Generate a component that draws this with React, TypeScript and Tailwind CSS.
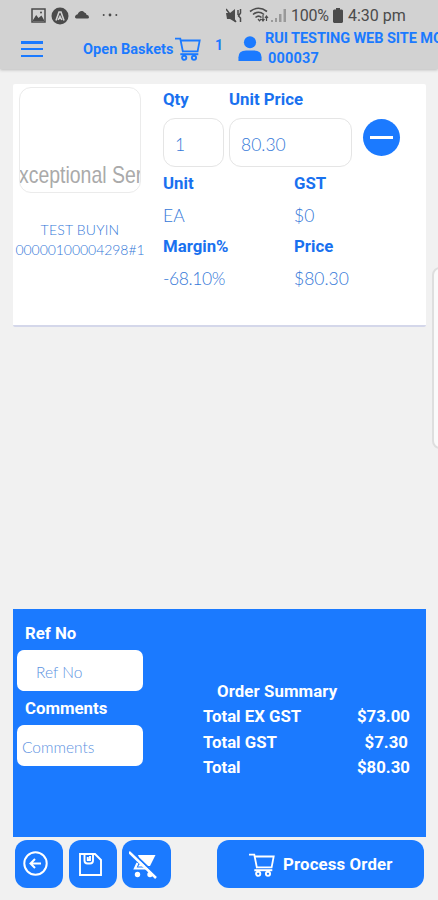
import type { ReactNode } from "react";

const summary = [
  { label: "Total EX GST", value: "$73.00", pad: "pr-0" },
  { label: "Total GST", value: "$7.30", pad: "pr-0.5" },
  { label: "Total", value: "$80.30", pad: "pr-0" },
];

function CartIcon({ className }: { className: string }) {
  return (
    <svg viewBox="0 0 26 24" className={className} fill="none" stroke="currentColor">
      <path d="M0 1.7h5.3L8 15.2M5.8 3.5h18.9l-2.1 10.8H7.8" strokeWidth="1.8" />
      <path d="M5.3 17.2h18" strokeWidth="2" />
      <circle cx="9.2" cy="20.8" r="2.1" strokeWidth="1.9" />
      <circle cx="19" cy="20.8" r="2.1" strokeWidth="1.9" />
    </svg>
  );
}

function StatusBar() {
  return (
    <div className="flex h-[31px] pt-[7px] pl-[31px] text-[#4b4b4b]">
      <svg viewBox="0 0 15 15" className="mt-px h-[15px] w-[15px] shrink-0">
        <path fill="none" stroke="currentColor" strokeWidth="1.5" d="M1 1h13v13H1z" />
        <path fill="currentColor" d="M2 12l3.2-5 2.3 3 3-2.5L13 12v1H2z" />
        <circle cx="10" cy="4.5" r="1" fill="currentColor" />
      </svg>
      <svg viewBox="0 0 18 18" className="ml-[5px] h-[18px] w-[18px] shrink-0">
        <circle cx="9" cy="9" r="8.5" fill="currentColor" />
        <path d="M5 13.5L8 5h2l3 8.5M7.2 13L9 9.5l1.8 3.5" fill="none" stroke="#d2d2d2" strokeWidth="1.6" />
      </svg>
      <svg viewBox="0 0 16 10" className="ml-[5px] mt-[3px] h-[9px] w-4 shrink-0">
        <path fill="currentColor" d="M1.8 9.5Q0 9.2.2 7.4.7 5 3.2 4.8C4.1 1 8.8-.6 11 3.1q1.7.1 2 2.2 2.7.4 2.8 2.8-.1 1.4-1.6 1.4z" />
      </svg>
      <svg viewBox="0 0 16 4" className="ml-3 mt-1.5 h-1 w-4 shrink-0" fill="currentColor">
        <circle cx="1.7" cy="2" r="1" />
        <circle cx="8" cy="2" r="1.4" />
        <circle cx="14.3" cy="2" r="1" />
      </svg>
      <svg viewBox="0 0 16 16" className="ml-[108px] mt-px h-4 w-4 shrink-0">
        <path fill="currentColor" d="M0 5h4l5-4v13l-5-3H1z" />
        <path d="M0 1l10 13M12 2v5M14.5 1v4l-2 3 2 2v4" fill="none" stroke="currentColor" strokeWidth="1.5" />
      </svg>
      <svg viewBox="0 0 20 16" className="ml-[7px] h-4 w-5 shrink-0" fill="none" stroke="currentColor">
        <path d="M1 4.5Q9.5-2 18 4.5M4 7.5q5.5-4.5 11 0M6.5 10.5q3-2.6 6 0" strokeWidth="1.6" />
        <path d="M9 12l1.5 1.8L12 12M14 8v6M12.5 12l1.5 2 1.5-2M17.5 14V9M16 11l1.5-2 1.5 2" strokeWidth="1.2" />
      </svg>
      <svg viewBox="0 0 16 16" className="ml-0.5 h-4 w-4 shrink-0 text-[#999]" fill="currentColor">
        <path d="M0 13h2v2H0zM4 11h2v4H4zM8 7h2.5v8H8zM12.5 2H15v13h-2.5z" />
      </svg>
      <span className="ml-1 w-[42px] whitespace-nowrap text-[16px] leading-[18px] tracking-[-0.25px]">100%</span>
      <svg viewBox="0 0 10 15" className="mt-px h-[15px] w-2.5 shrink-0" fill="currentColor">
        <path d="M3 0h4v1.5h2l1 1V14l-1 1H1l-1-1V2.5l1-1h2z" />
      </svg>
      <span className="ml-[5px] whitespace-nowrap text-[16px] leading-[18px]">4:30 pm</span>
    </div>
  );
}

function Header() {
  return (
    <header className="h-[69px] shrink-0 overflow-hidden bg-[#d2d2d2] shadow-[0_1px_3px_#bbb]">
      <StatusBar />
      <div className="flex h-[38px] font-bold text-[#1b7aff]">
        <button className="ml-[21px] mt-[10px] flex h-4 w-[22px] shrink-0 flex-col justify-between">
          <span className="h-[2.5px] w-full bg-current" />
          <span className="h-[2.5px] w-full bg-current" />
          <span className="h-[2.5px] w-full bg-current" />
        </button>
        <span className="ml-10 mt-[10px] w-[91px] shrink-0 whitespace-nowrap text-[14.5px] leading-[18px] tracking-[0.05px]">
          Open Baskets
        </span>
        <CartIcon className="ml-[1px] mt-1.5 h-6 w-[26px] shrink-0" />
        <span className="ml-[14px] mt-[5px] w-2 shrink-0 text-[14px] leading-[18px]">1</span>
        <svg viewBox="0 0 24 27" className="ml-[15px] mt-[5px] h-[26px] w-6 shrink-0" fill="currentColor">
          <circle cx="12" cy="6.5" r="6.3" />
          <path d="M0 26v-4q0-7 8-7h8q8 0 8 7v4z" />
        </svg>
        <div className="ml-[3px] -mt-0.5 whitespace-nowrap text-[14.5px] leading-5">
          <div className="tracking-[-0.07px]">RUI TESTING WEB SITE MOBILE</div>
          <div className="pl-[3px] tracking-[0.18px]">000037</div>
        </div>
      </div>
    </header>
  );
}

function Label({ children, className }: { children: ReactNode; className: string }) {
  return <div className={`text-[16.8px] font-bold leading-[18px] ${className}`}>{children}</div>;
}

function Value({ children, className }: { children: ReactNode; className: string }) {
  return (
    <div className={`font-[Lato] text-[17.5px] font-light leading-[18px] text-[#3478d8] ${className}`}>
      {children}
    </div>
  );
}

function ItemCard() {
  return (
    <section className="ml-[13px] mt-[15px] flex h-[243px] w-[413px] shrink-0 rounded-xs border-b-2 border-[#d4d7ea] bg-white text-[#1971ef]">
      <div className="w-[134px] shrink-0">
        <div className="ml-1.5 mt-[3px] h-[106px] w-[122px] overflow-hidden rounded-xl border border-[#ebebeb] pt-[75px]">
          <span className="-ml-px block origin-left scale-x-[0.81] whitespace-nowrap font-['Liberation_Sans'] text-[24px] leading-6 text-[#aaa]">
            xceptional Service
          </span>
        </div>
        <div className="mt-[27px] whitespace-nowrap text-center font-[Lato] text-[14px] font-light leading-5 text-[#3478d8]">
          <div className="tracking-[0.2px]">TEST BUYIN</div>
          <div className="tracking-[-0.05px]">00000100004298#1</div>
        </div>
      </div>
      <div className="ml-4 mt-1.5">
        <div className="flex">
          <Label className="w-[66px]">Qty</Label>
          <Label className="">Unit Price</Label>
        </div>
        <div className="mt-[10px] flex">
          <div className="h-[49px] w-[61px] rounded-xl border border-[#e5e5e5] pl-[11px] pt-[17px]">
            <Value className="">1</Value>
          </div>
          <div className="ml-[5px] h-[49px] w-[123px] rounded-xl border border-[#e5e5e5] pl-[11px] pt-[17px]">
            <Value className="">80.30</Value>
          </div>
          <button className="ml-[11px] mt-px flex h-[37px] w-[37px] items-center justify-center rounded-full bg-[#1b7aff]">
            <span className="h-[3px] w-[23px] bg-white" />
          </button>
        </div>
        <div className="mt-[7px] grid grid-cols-[131px_1fr]">
          <Label className="">Unit</Label>
          <Label className="">GST</Label>
          <Value className="mt-[15px]">EA</Value>
          <Value className="mt-[15px]">$0</Value>
          <Label className="mt-3">Margin%</Label>
          <Label className="mt-3">Price</Label>
          <Value className="mt-[15px] tracking-[-0.4px]">-68.10%</Value>
          <Value className="mt-[15px]">$80.30</Value>
        </div>
      </div>
    </section>
  );
}

function OrderPanel() {
  return (
    <section className="ml-[13px] flex h-[228px] w-[413px] shrink-0 bg-[#1b7aff] text-white">
      <div className="ml-1 w-[126px] pt-[15px]">
        <Label className="ml-2">Ref No</Label>
        <input
          placeholder="Ref No"
          className="mt-2 block h-[41px] w-full rounded-[7px] bg-white pl-[19px] pt-[3px] font-[Lato] text-[15.5px] font-light placeholder:text-[#5d92df]"
        />
        <Label className="ml-2 mt-2">Comments</Label>
        <input
          placeholder="Comments"
          className="mt-2 block h-[41px] w-full rounded-[7px] bg-white pl-[5px] pt-[3px] font-[Lato] text-[15.5px] font-light placeholder:text-[#5d92df]"
        />
      </div>
      <div className="ml-[60px] w-[207px] pt-[73px]">
        <Label className="mb-[7px] ml-[14px] tracking-[0.1px]">Order Summary</Label>
        <div className="flex flex-col gap-[7.5px]">
          {summary.map((row) => (
            <div key={row.label} className="flex justify-between">
              <Label className="">{row.label}</Label>
              <Label className={row.pad}>{row.value}</Label>
            </div>
          ))}
        </div>
      </div>
    </section>
  );
}

function Actions() {
  return (
    <footer className="mt-[3px] flex pl-[15px] text-white">
      <button className="flex h-12 w-12 items-start rounded-xl bg-[#1b7aff] pl-2 pt-[11px]">
        <svg viewBox="0 0 25 25" className="h-[25px] w-[25px]" fill="none" stroke="currentColor" strokeWidth="2">
          <circle cx="12.5" cy="12.5" r="11.2" />
          <path d="M18 12.5H8M12 8l-4.5 4.5L12 17" />
        </svg>
      </button>
      <button className="ml-1.5 flex h-12 w-12 items-start rounded-xl bg-[#1b7aff] pl-2.5 pt-[13px]">
        <svg viewBox="0 0 23 23" className="h-[23px] w-[23px]" fill="none" stroke="currentColor" strokeWidth="1.9">
          <path d="M1 1h15l6 6v15H1z" />
          <path d="M5.5 1v6.5q0 3 3 3h2.5q3 0 3-3V1M11 3v4H8.8V4" />
        </svg>
      </button>
      <button className="ml-[5px] flex h-12 w-[49px] items-start rounded-xl bg-[#1b7aff] pl-[7px] pt-[11px]">
        <svg viewBox="0 0 28 28" className="h-7 w-7">
          <path fill="currentColor" d="M9 4h17.5L21 15h-8z" />
          <path d="M8.5 12L6 17.5h15" fill="none" stroke="currentColor" strokeWidth="2.2" />
          <path d="M9 15.5l2.5-3.5 3 3.5z" fill="currentColor" />
          <circle cx="8.5" cy="23.5" r="2.7" fill="currentColor" />
          <circle cx="21" cy="23.5" r="2.7" fill="currentColor" />
          <path d="M2 0l25 24" stroke="#1b7aff" strokeWidth="2" />
          <path d="M0 1l27 26" stroke="currentColor" strokeWidth="2.5" />
        </svg>
      </button>
      <button className="ml-[46px] flex h-12 w-[207px] items-start rounded-xl bg-[#1b7aff] pl-8 pt-[13px]">
        <CartIcon className="h-6 w-[26px] shrink-0" />
        <Label className="ml-2 mt-0.5 whitespace-nowrap tracking-[0.15px]">Process Order</Label>
      </button>
    </footer>
  );
}

export default function App() {
  return (
    <main className="relative flex h-[900px] w-[438px] flex-col overflow-hidden bg-[#f1f1f1] font-[Roboto]">
      <Header />
      <ItemCard />
      <div className="h-[282px] shrink-0" />
      <OrderPanel />
      <Actions />
      <div className="absolute left-[432px] top-[267px] h-[182px] w-5 rounded-lg border-2 border-[#dedede] bg-[#fafafa]" />
    </main>
  );
}
